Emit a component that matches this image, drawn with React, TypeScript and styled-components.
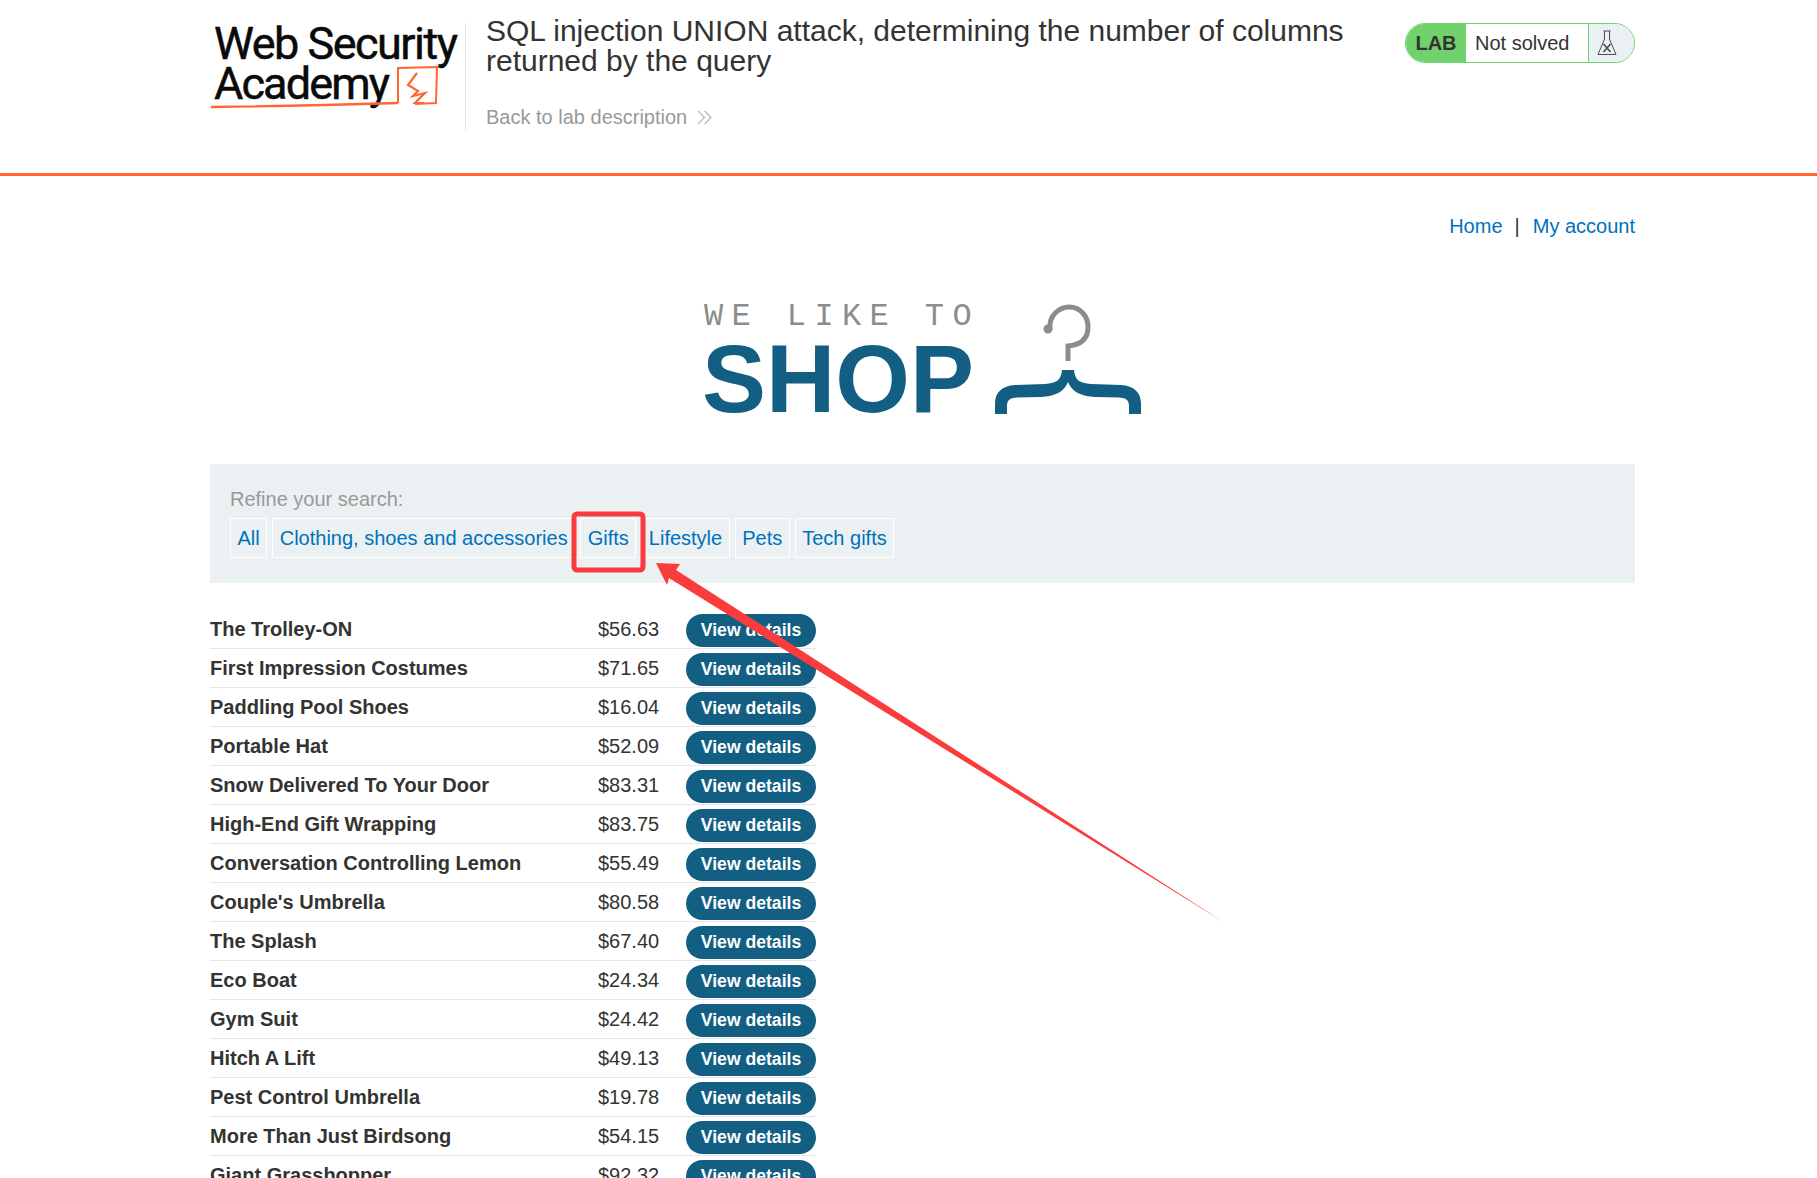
import styled, { createGlobalStyle } from 'styled-components';

const products: [string, string][] = [
  ['The Trolley-ON', '$56.63'],
  ['First Impression Costumes', '$71.65'],
  ['Paddling Pool Shoes', '$16.04'],
  ['Portable Hat', '$52.09'],
  ['Snow Delivered To Your Door', '$83.31'],
  ['High-End Gift Wrapping', '$83.75'],
  ['Conversation Controlling Lemon', '$55.49'],
  ["Couple's Umbrella", '$80.58'],
  ['The Splash', '$67.40'],
  ['Eco Boat', '$24.34'],
  ['Gym Suit', '$24.42'],
  ['Hitch A Lift', '$49.13'],
  ['Pest Control Umbrella', '$19.78'],
  ['More Than Just Birdsong', '$54.15'],
  ['Giant Grasshopper', '$92.32'],
];

const categories = ['All', 'Clothing, shoes and accessories', 'Gifts', 'Lifestyle', 'Pets', 'Tech gifts'];

export default function App() {
  return (
    <Page>
      <GlobalStyle />
      <Header>
        <AcademyLogo />
        <HeaderDivider />
        <TitleBlock>
          <LabTitle>SQL injection UNION attack, determining the number of columns returned by the query</LabTitle>
          <BackLink>
            Back to lab description
            <svg width="16" height="15" viewBox="0 0 16 15" fill="none" stroke="#b3b3b3" strokeWidth="1.2">
              <path d="M1 0.8 L7.5 7.5 L1 14.2" />
              <path d="M7.5 0.8 L14 7.5 L7.5 14.2" />
            </svg>
          </BackLink>
        </TitleBlock>
        <LabBadge>
          <LabTag>LAB</LabTag>
          <LabStatus>Not solved</LabStatus>
          <LabIcon>
            <svg width="20" height="26" viewBox="0 0 20 26" fill="none" stroke="#4d4d4d" strokeWidth="1">
              <path d="M6.5 1 H13.5 M7.5 1 V9 L1 24.5 H19 L12.5 9 V1" />
              <path d="M6.5 14 L13.5 22 M13.5 14 L6.5 22" strokeWidth="1.6" />
            </svg>
          </LabIcon>
        </LabBadge>
      </Header>

      <Content>
        <TopNav>
          <NavLink>Home</NavLink>
          <NavSep>|</NavSep>
          <NavLink>My account</NavLink>
        </TopNav>

        <ShopLogo>
          <ShopWords>
            <WeLikeTo>WE LIKE TO</WeLikeTo>
            <ShopWord>SHOP</ShopWord>
          </ShopWords>
          <svg width="148" height="110" viewBox="0 0 148 110" fill="none">
            <path d="M55 26 C53 10 66 3 74 3 C86 3 93 13 93 23 C93 36 84 41 73 42 V57" stroke="#8c8c8c" strokeWidth="5" />
            <circle cx="53" cy="25" r="4.5" fill="#8c8c8c" />
            <path
              d="M67 66 H79 C80 76 84 79 96 80 L126 81 C139 82 146 88 146 100 V110 H134 V102 C134 96 131 94 124 93.5 L100 93 C86 92 77 88 73 78 C69 88 60 92 46 93 L22 93.5 C15 94 12 96 12 102 V110 H0 V100 C0 88 7 82 20 81 L50 80 C62 79 66 76 67 66 Z"
              fill="#135f83"
            />
          </svg>
        </ShopLogo>

        <FilterPanel>
          <FilterLabel>Refine your search:</FilterLabel>
          <FilterLinks>
            {categories.map((c) => (
              <FilterLink key={c}>{c}</FilterLink>
            ))}
          </FilterLinks>
        </FilterPanel>

        <ProductList>
          {products.map(([name, price]) => (
            <ProductRow key={name}>
              <ProductName>{name}</ProductName>
              <ProductPrice>{price}</ProductPrice>
              <DetailsButton>View details</DetailsButton>
            </ProductRow>
          ))}
        </ProductList>
      </Content>

      {/* red annotation drawn over the screenshot */}
      <Annotation width="1817" height="1178" viewBox="0 0 1817 1178">
        <rect x="574" y="514" width="69" height="56" rx="3" fill="none" stroke="#f93b3d" strokeWidth="5" />
        <polygon points="656,563 680,564 676,570 1225,923 669,578 667,585" fill="#fb3c3c" />
      </Annotation>
    </Page>
  );
}

function AcademyLogo() {
  return (
    <LogoSvg width="252" height="90" viewBox="0 0 252 90">
      <LogoText x="4" y="35" textLength="244" lengthAdjust="spacing">Web Security</LogoText>
      <LogoText x="4" y="75" textLength="176" lengthAdjust="spacing">Academy</LogoText>
      <path d="M188 79 L188 44 L227 43 L226 79 L205 80" fill="none" stroke="#ff6633" strokeWidth="2" />
      <path d="M1 83 Q90 82 188 79" fill="none" stroke="#ff6633" strokeWidth="2.4" />
      <path d="M207 49 L198 61 L208 67 L203 72 L215 69 L205 79 L214 79" fill="none" stroke="#ff6633" strokeWidth="2.2" />
    </LogoSvg>
  );
}

const GlobalStyle = createGlobalStyle`
  html, body {
    margin: 0;
    height: 1178px;
    overflow: hidden;
    background: #fff;
  }
  * { box-sizing: border-box; }
`;

const Page = styled.div`
  position: relative;
  width: 1817px;
  height: 1178px;
  overflow: hidden;
  font-family: "Liberation Sans", Arial, sans-serif;
  font-size: 20px;
  color: #333332;
`;

const Header = styled.header`
  display: flex;
  align-items: flex-start;
  height: 176px;
  padding: 23px 182px 0 210px;
  border-bottom: 3px solid #ff6633;
`;

const LogoSvg = styled.svg`
  flex: none;
  margin: 1px -4px 0 0;
`;

const LogoText = styled.text`
  font-family: Roboto, "Noto Sans", sans-serif;
  font-size: 45px;
  font-weight: 400;
  fill: #0a0a0a;
  stroke: #0a0a0a;
  stroke-width: 0.5px;
`;

const HeaderDivider = styled.div`
  flex: none;
  width: 1px;
  height: 107px;
  margin: 0 20px 0 7px;
  background: #e6e6e6;
`;

const TitleBlock = styled.div`
  flex: none;
  width: 880px;
  margin: -7px 39px 0 0;
`;

const LabTitle = styled.h2`
  margin: 0;
  font-size: 30px;
  font-weight: 400;
  line-height: 30px;
  color: #333332;
`;

const BackLink = styled.div`
  display: flex;
  align-items: center;
  gap: 10px;
  margin-top: 29px;
  font-size: 20px;
  line-height: 24px;
  color: #999;
`;

const LabBadge = styled.div`
  flex: none;
  display: flex;
  width: 230px;
  height: 40px;
  border: 1px solid #70d16d;
  border-radius: 20px;
  overflow: hidden;
`;

const LabTag = styled.div`
  flex: none;
  width: 60px;
  display: flex;
  align-items: center;
  justify-content: center;
  background: #70d16d;
  font-weight: 700;
  font-size: 20px;
  color: #333332;
`;

const LabStatus = styled.div`
  flex: none;
  width: 123px;
  padding-left: 9px;
  display: flex;
  align-items: center;
  border-right: 1px solid #70d16d;
  color: #333332;
`;

const LabIcon = styled.div`
  flex: 1;
  display: flex;
  align-items: center;
  justify-content: center;
  padding-right: 10px;
  background: #ebf0f2;
`;

const Content = styled.main`
  width: 1425px;
  margin-left: 210px;
`;

const TopNav = styled.nav`
  display: flex;
  justify-content: flex-end;
  align-items: center;
  gap: 13px;
  height: 24px;
  margin-top: 38px;
`;

const NavLink = styled.a`
  color: #0071bc;
  line-height: 24px;
`;

const NavSep = styled.span`
  margin-left: -1px;
  color: #333332;
`;

const ShopLogo = styled.div`
  display: flex;
  justify-content: flex-start;
  align-items: flex-end;
  gap: 23px;
  height: 110px;
  margin-top: 66px;
  padding-left: 494px;
`;

const ShopWords = styled.div`
  display: flex;
  flex-direction: column;
  width: 268px;
  margin-bottom: -7px;
`;

const WeLikeTo = styled.span`
  margin-bottom: 7px;
  font-family: "Liberation Mono", "Courier New", monospace;
  font-size: 32px;
  line-height: 26px;
  letter-spacing: 8.4px;
  white-space: pre;
  color: #8c8c8c;
`;

const ShopWord = styled.span`
  font-size: 96px;
  font-weight: 700;
  line-height: 84px;
  color: #135f83;
  margin-left: -2px;
`;

const FilterPanel = styled.section`
  height: 119px;
  margin-top: 50px;
  padding: 23px 20px 24px;
  background: #ebf0f2;
`;

const FilterLabel = styled.div`
  line-height: 24px;
  color: #999;
`;

const FilterLinks = styled.div`
  display: flex;
  gap: 5px;
  margin-top: 7px;
`;

const FilterLink = styled.a`
  height: 40px;
  padding: 0 6.5px;
  display: flex;
  align-items: center;
  border: 1px solid #fff;
  color: #0071bc;
`;

const ProductList = styled.div`
  width: 606px;
  margin-top: 31px;
`;

const ProductRow = styled.div`
  display: grid;
  grid-template-columns: 388px 88px 130px;
  align-items: start;
  height: 35px;
  margin-bottom: 4px;
  border-bottom: 1px solid #e6e6e6;
`;

const ProductName = styled.span`
  font-weight: 700;
  font-size: 20px;
  line-height: 31px;
  color: #333332;
  white-space: nowrap;
`;

const ProductPrice = styled.span`
  font-size: 20px;
  line-height: 31px;
`;

const DetailsButton = styled.button`
  height: 33px;
  padding: 0;
  border: none;
  border-radius: 17px;
  background: #135f83;
  color: #fff;
  font-family: inherit;
  font-size: 17.6px;
  font-weight: 700;
`;

const Annotation = styled.svg`
  position: absolute;
  top: 0;
  left: 0;
  pointer-events: none;
`;
